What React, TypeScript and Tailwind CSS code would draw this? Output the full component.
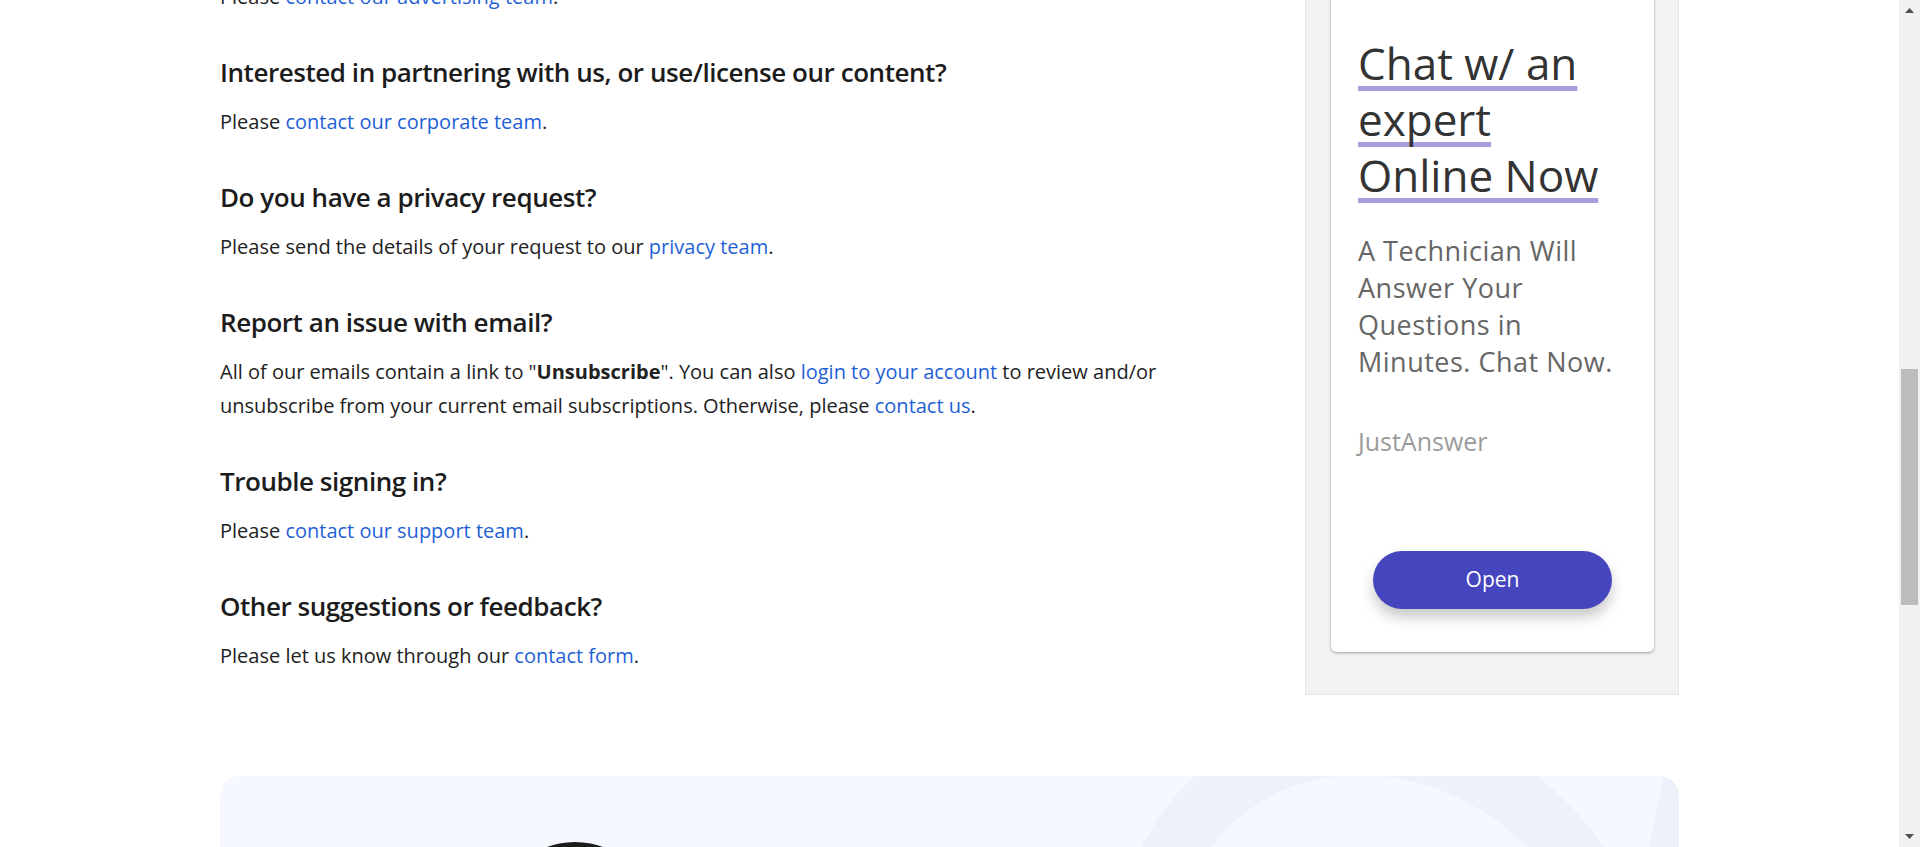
import React from 'react';

const bodyFont = { fontFamily: '"Open Sans", "Liberation Sans", sans-serif' };

function A({ children }: { children: React.ReactNode }) {
  return <a className="text-[#1f5fd6] no-underline">{children}</a>;
}

const Section: React.FC<{ title: string; children: React.ReactNode }> = ({ title, children }) => (
  <div className="mb-[42px]">
    <h2 className="text-[26px] leading-[32px] font-semibold text-[#1c1c1c] mb-[17px] tracking-[-0.45px]">{title}</h2>
    <p className="text-[20px] leading-[34px] text-[#222]">{children}</p>
  </div>
);

const AdCard: React.FC = () => (
  <div className="w-[374px] shrink-0 bg-[#f1f2f4] border border-[#e4e5e7] pl-[25px] pr-[24px] pb-[42px]">
    <div
      className="bg-white rounded-b-[6px] shadow-[0_1px_3px_rgba(0,0,0,0.35)] pt-[54px] pb-[43px] px-[27px]"
      style={{ fontFamily: '"Open Sans", "Liberation Sans", sans-serif' }}
    >
      <h3 className="text-[44px] leading-[56px] text-[#333] font-normal">
        <span className="underline decoration-[#a5a0dc] decoration-[5px] underline-offset-[6px] [text-decoration-skip-ink:none]">
          Chat w/ an expert Online Now
        </span>
      </h3>
      <p className="mt-[29px] text-[27px] leading-[37px] text-[#666] tracking-[0.5px]">
        A Technician Will Answer Your Questions in Minutes. Chat Now.
      </p>
      <p className="mt-[46px] text-[25px] leading-[30px] text-[#9b9b9b]">JustAnswer</p>
      <div className="mt-[95px] flex justify-center">
        <button className="w-[239px] h-[58px] rounded-full bg-[#4545be] text-white text-[21px] shadow-[0_8px_14px_rgba(0,0,0,0.22)]">
          Open
        </button>
      </div>
    </div>
  </div>
);

const Scrollbar: React.FC = () => (
  <div className="w-[21px] shrink-0 h-full bg-[#f1f1f1] flex flex-col items-center">
    <svg width="9" height="5" viewBox="0 0 9 5" className="mt-[8px]">
      <path d="M0 5 L4.5 0 L9 5 Z" fill="#505050" />
    </svg>
    <div className="mt-[356px] w-[17px] h-[236px] bg-[#bcbcbc]" />
    <div className="flex-1" />
    <svg width="9" height="5" viewBox="0 0 9 5" className="mb-[8px]">
      <path d="M0 0 L9 0 L4.5 5 Z" fill="#505050" />
    </svg>
  </div>
);

export default function App() {
  return (
    <div className="h-[847px] w-[1920px] overflow-hidden flex bg-white" style={bodyFont}>
      <div className="flex-1 overflow-hidden">
        <div className="w-[1459px] mx-auto">
          <div className="flex items-start justify-between mt-[-20px]">
            <div className="w-[1000px]">
              <p className="text-[20px] leading-[34px] text-[#222] mb-[42px]">
                Please <A>contact our advertising team</A>.
              </p>
              <Section title="Interested in partnering with us, or use/license our content?">
                Please <A>contact our corporate team</A>.
              </Section>
              <Section title="Do you have a privacy request?">
                Please send the details of your request to our <A>privacy team</A>.
              </Section>
              <Section title="Report an issue with email?">
                All of our emails contain a link to "<b className="font-bold">Unsubscribe</b>". You can also{' '}
                <A>login to your account</A> to review and/or unsubscribe from your current email subscriptions.
                Otherwise, please <A>contact us</A>.
              </Section>
              <Section title="Trouble signing in?">
                Please <A>contact our support team</A>.
              </Section>
              <Section title="Other suggestions or feedback?">
                Please let us know through our <A>contact form</A>.
              </Section>
            </div>
            <AdCard />
          </div>

          <div className="relative mt-[61px] h-[300px] rounded-[20px] bg-[#f5f8fe] overflow-hidden pt-[66px]">
            <svg className="absolute inset-0" width="1459" height="300" viewBox="0 0 1459 300">
              <path d="M940 104 C1010 -76 1260 -76 1370 104 L1400 180" fill="none" stroke="#edf1fa" strokeWidth="60" />
              <polygon points="1444,0 1459,0 1459,300 1380,300" fill="#edf1fa" />
            </svg>
            <div className="relative ml-[275px] w-[160px] h-[160px] rounded-full bg-[#1b1b1b]" />
          </div>
        </div>
      </div>
      <Scrollbar />
    </div>
  );
}
